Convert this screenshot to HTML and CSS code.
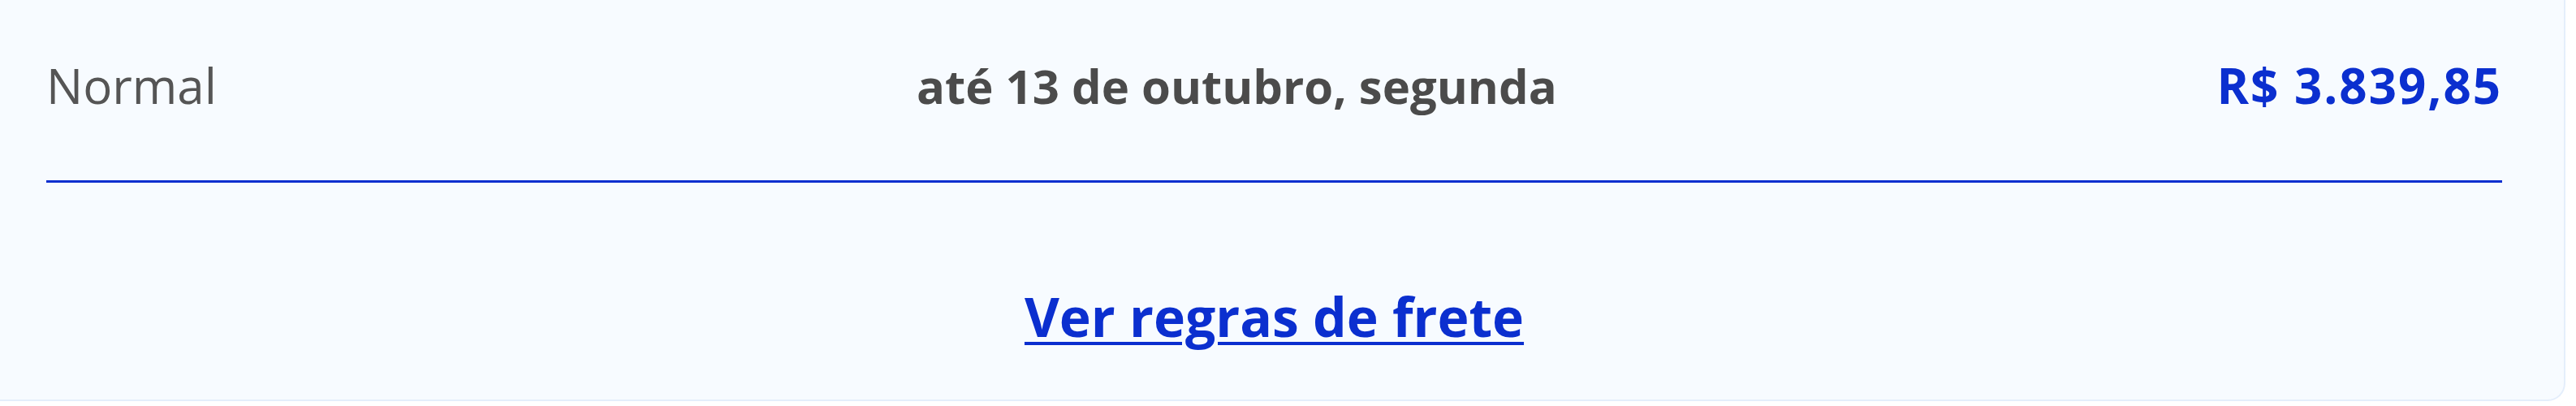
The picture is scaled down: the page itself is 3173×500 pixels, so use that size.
FILE: index.html
```html
<!DOCTYPE html>
<html lang="pt-BR">
<head>
    <meta charset="UTF-8">
    <title>Frete</title>
    <link rel="stylesheet" href="styles.css">
</head>
<body>
    <div class="shipping-card">
        <div class="shipping-row">
            <span class="shipping-type">Normal</span>
            <span class="shipping-date">até 13 de outubro, segunda</span>
            <span class="shipping-price">R$ 3.839,85</span>
        </div>
        <div class="rules">
            <a href="#" class="rules-link">Ver regras de frete</a>
        </div>
    </div>
</body>
</html>
```

FILE: styles.css
```css
body {
    margin: 0;
    padding: 0;
    background: #ffffff;
    font-family: "Open Sans", "Noto Sans", sans-serif;
}

.shipping-card {
    width: 3160px;
    height: 494px;
    box-sizing: border-box;
    padding: 0 76px 0 57px;
    background: #f7fbff;
    border-right: 2px solid #e4eefb;
    border-bottom: 2px solid #e4eefb;
    border-bottom-right-radius: 22px;
}

.shipping-row {
    display: grid;
    grid-template-columns: 1072px 1fr auto;
    align-items: baseline;
    padding: 69px 0 80px;
    border-bottom: 3px solid #0b2fcf;
    line-height: 72px;
}

.shipping-type {
    font-size: 60px;
    color: #555555;
}

.shipping-date {
    font-size: 58px;
    font-weight: bold;
    color: #4b4b4b;
}

.shipping-price {
    font-size: 60px;
    font-weight: bold;
    letter-spacing: 2px;
    color: #0b2fcf;
}

.rules {
    margin-top: 124px;
    text-align: center;
    line-height: 80px;
}

.rules-link {
    font-size: 66px;
    font-weight: bold;
    color: #0b2fcf;
    text-decoration: underline;
    text-decoration-thickness: 4px;
    text-underline-offset: 6px;
}
```
